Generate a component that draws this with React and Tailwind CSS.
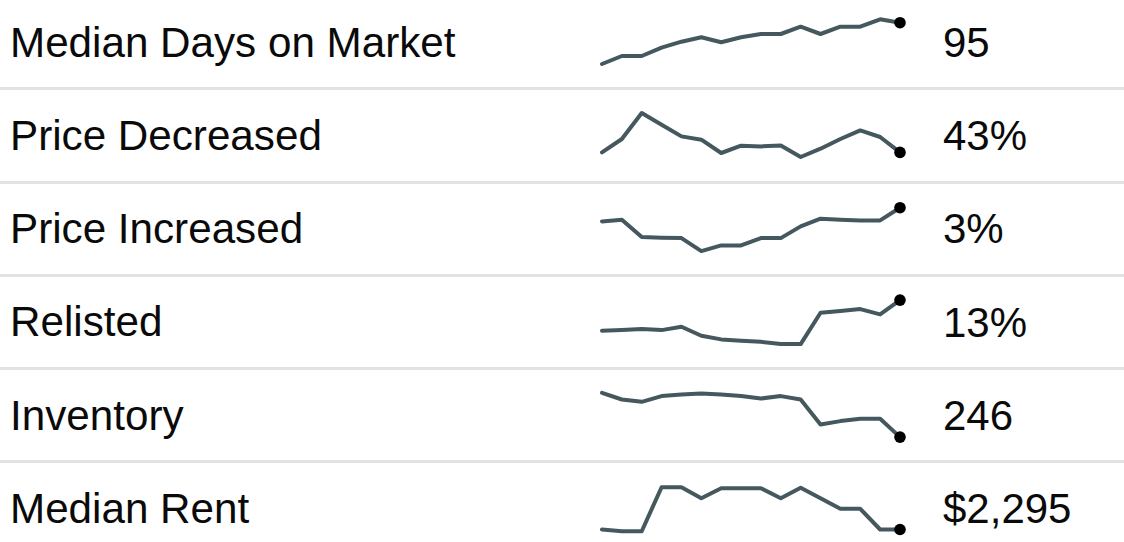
import React from "react";

// sparkline y values are row-relative (row content is ~90px tall)
const rows = [
  {
    label: "Median Days on Market",
    value: "95",
    ys: [67, 59, 59, 50.7, 44.7, 40.3, 45.3, 40.3, 37, 37, 29.7, 37, 29.7, 29.7, 22.3, 25.7],
  },
  {
    label: "Price Decreased",
    value: "43%",
    ys: [62.4, 49, 23, 34.7, 46.4, 49.7, 63, 55.7, 56.4, 55.4, 67, 58.7, 49, 40.4, 47, 62.4],
  },
  {
    label: "Price Increased",
    value: "3%",
    ys: [37.4, 35.7, 53.1, 53.7, 54.1, 67.1, 61.4, 61.4, 54.1, 54.1, 42.4, 34.7, 35.7, 36.4, 36.4, 23.7],
  },
  {
    label: "Relisted",
    value: "13%",
    ys: [53.8, 53.1, 52.1, 53.1, 49.8, 58.8, 62.4, 63.8, 64.8, 67.1, 67.1, 35.8, 34.1, 32.1, 37.4, 23.1],
  },
  {
    label: "Inventory",
    value: "246",
    ys: [22.8, 29.5, 31.8, 26.1, 24.5, 23.5, 24.5, 26.1, 28.5, 26.1, 29.5, 54.5, 51.1, 48.8, 48.8, 67.1],
  },
  {
    label: "Median Rent",
    value: "$2,295",
    ys: [65.5, 67.2, 67.2, 23.2, 23.2, 34.2, 24.2, 24.2, 24.2, 34.2, 23.8, 34.2, 44.8, 44.8, 65.5, 65.5],
  },
];

function Sparkline({ ys }) {
  const step = 298 / (ys.length - 1);
  const pts = ys.map((y, i) => [6 + i * step, y]);
  const last = pts[pts.length - 1];
  return (
    <svg width="310" height="90" viewBox="0 0 310 90" className="block">
      <polyline
        points={pts.map((p) => p.join(",")).join(" ")}
        fill="none"
        stroke="#44585e"
        strokeWidth="4"
        strokeLinejoin="round"
        strokeLinecap="round"
      />
      <circle cx={last[0]} cy={last[1]} r="5.8" fill="#000" />
    </svg>
  );
}

export default function App() {
  return (
    <div
      className="w-[1124px] h-[542px] overflow-hidden bg-white text-[#0a0a0a]"
      style={{ fontFamily: '"Liberation Sans", Arial, sans-serif' }}
    >
      <div className="-mt-[3px]">
        {rows.map((r) => (
          <div
            key={r.label}
            className="grid grid-cols-[596px_310px_1fr] items-center h-[93.3px] border-b-[3px] border-[#e2e2e2]"
          >
            <div className="pl-[10px] text-[42.2px] leading-normal whitespace-nowrap">
              {r.label}
            </div>
            <Sparkline ys={r.ys} />
            <div className="pl-[37px] text-[42px] leading-normal whitespace-nowrap">
              {r.value}
            </div>
          </div>
        ))}
      </div>
    </div>
  );
}
